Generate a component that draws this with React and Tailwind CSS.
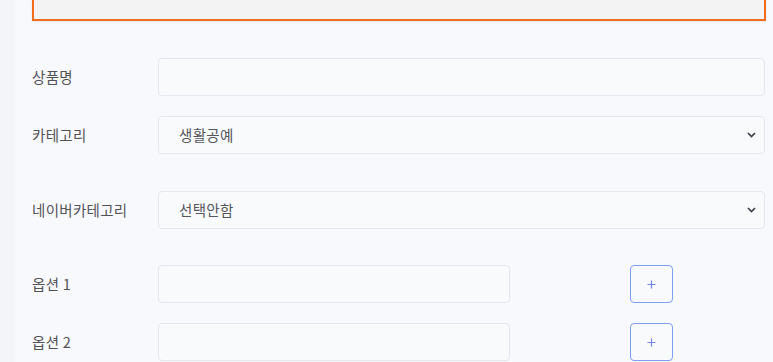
import React from 'react'

const font = { fontFamily: '"Noto Sans CJK KR", "Noto Sans", sans-serif' }

function Chevron() {
  return (
    <svg width="9" height="6" viewBox="0 0 9 6" className="absolute right-[8px] top-1/2 -translate-y-1/2">
      <path d="M1 1l3.5 3.5L8 1" fill="none" stroke="#3c3f4a" strokeWidth="1.7" />
    </svg>
  )
}

function Row({ label, className = '', children }) {
  return (
    <div className={`flex items-center ${className}`}>
      <div className="w-[126px] shrink-0 text-[14.5px] tracking-[0.3px] text-[#525257]">{label}</div>
      {children}
    </div>
  )
}

const box = 'h-[38px] border border-[#e4e6f0] rounded-[4px] bg-[#f9fafc]'

function SelectBox({ value }) {
  return (
    <div className={`relative w-[607px] ${box} flex items-center pl-[20px] text-[14.5px] tracking-[0.3px] text-[#54565c]`}>
      {value}
      <Chevron />
    </div>
  )
}

function OptionRow({ label, className }) {
  return (
    <Row label={label} className={className}>
      <div className={`w-[352px] ${box}`} />
      <button className="ml-[120px] w-[43px] h-[38px] border-[1.5px] border-[#7d9ef4] rounded-[4px] bg-[#f9fafc] flex items-center justify-center">
        <svg width="9" height="9" viewBox="0 0 9 9">
          <path d="M4.5 0.5v8M0.5 4.5h8" stroke="#7484ee" strokeWidth="1.2" />
        </svg>
      </button>
    </Row>
  )
}

export default function App() {
  return (
    <div className="flex w-[773px] h-[362px] overflow-hidden bg-[#f8f9fc]" style={font}>
      <div className="w-[14px] shrink-0 bg-[#f4f5f9]" />
      <div className="pl-[18px] flex flex-col">
        <div className="w-[734px] h-[21px] bg-[#f3f3f3] border-x-2 border-b-2 border-[#f36b1c] shadow-[0_1px_2px_rgba(0,0,0,0.08)]" />

        <Row label="상품명" className="mt-[37px]">
          <div className={`w-[607px] ${box}`} />
        </Row>

        <Row label="카테고리" className="mt-[20px]">
          <SelectBox value="생활공예" />
        </Row>

        <Row label="네이버카테고리" className="mt-[37px]">
          <SelectBox value="선택안함" />
        </Row>

        <OptionRow label="옵션 1" className="mt-[36px]" />
        <OptionRow label="옵션 2" className="mt-[20px]" />
      </div>
    </div>
  )
}
